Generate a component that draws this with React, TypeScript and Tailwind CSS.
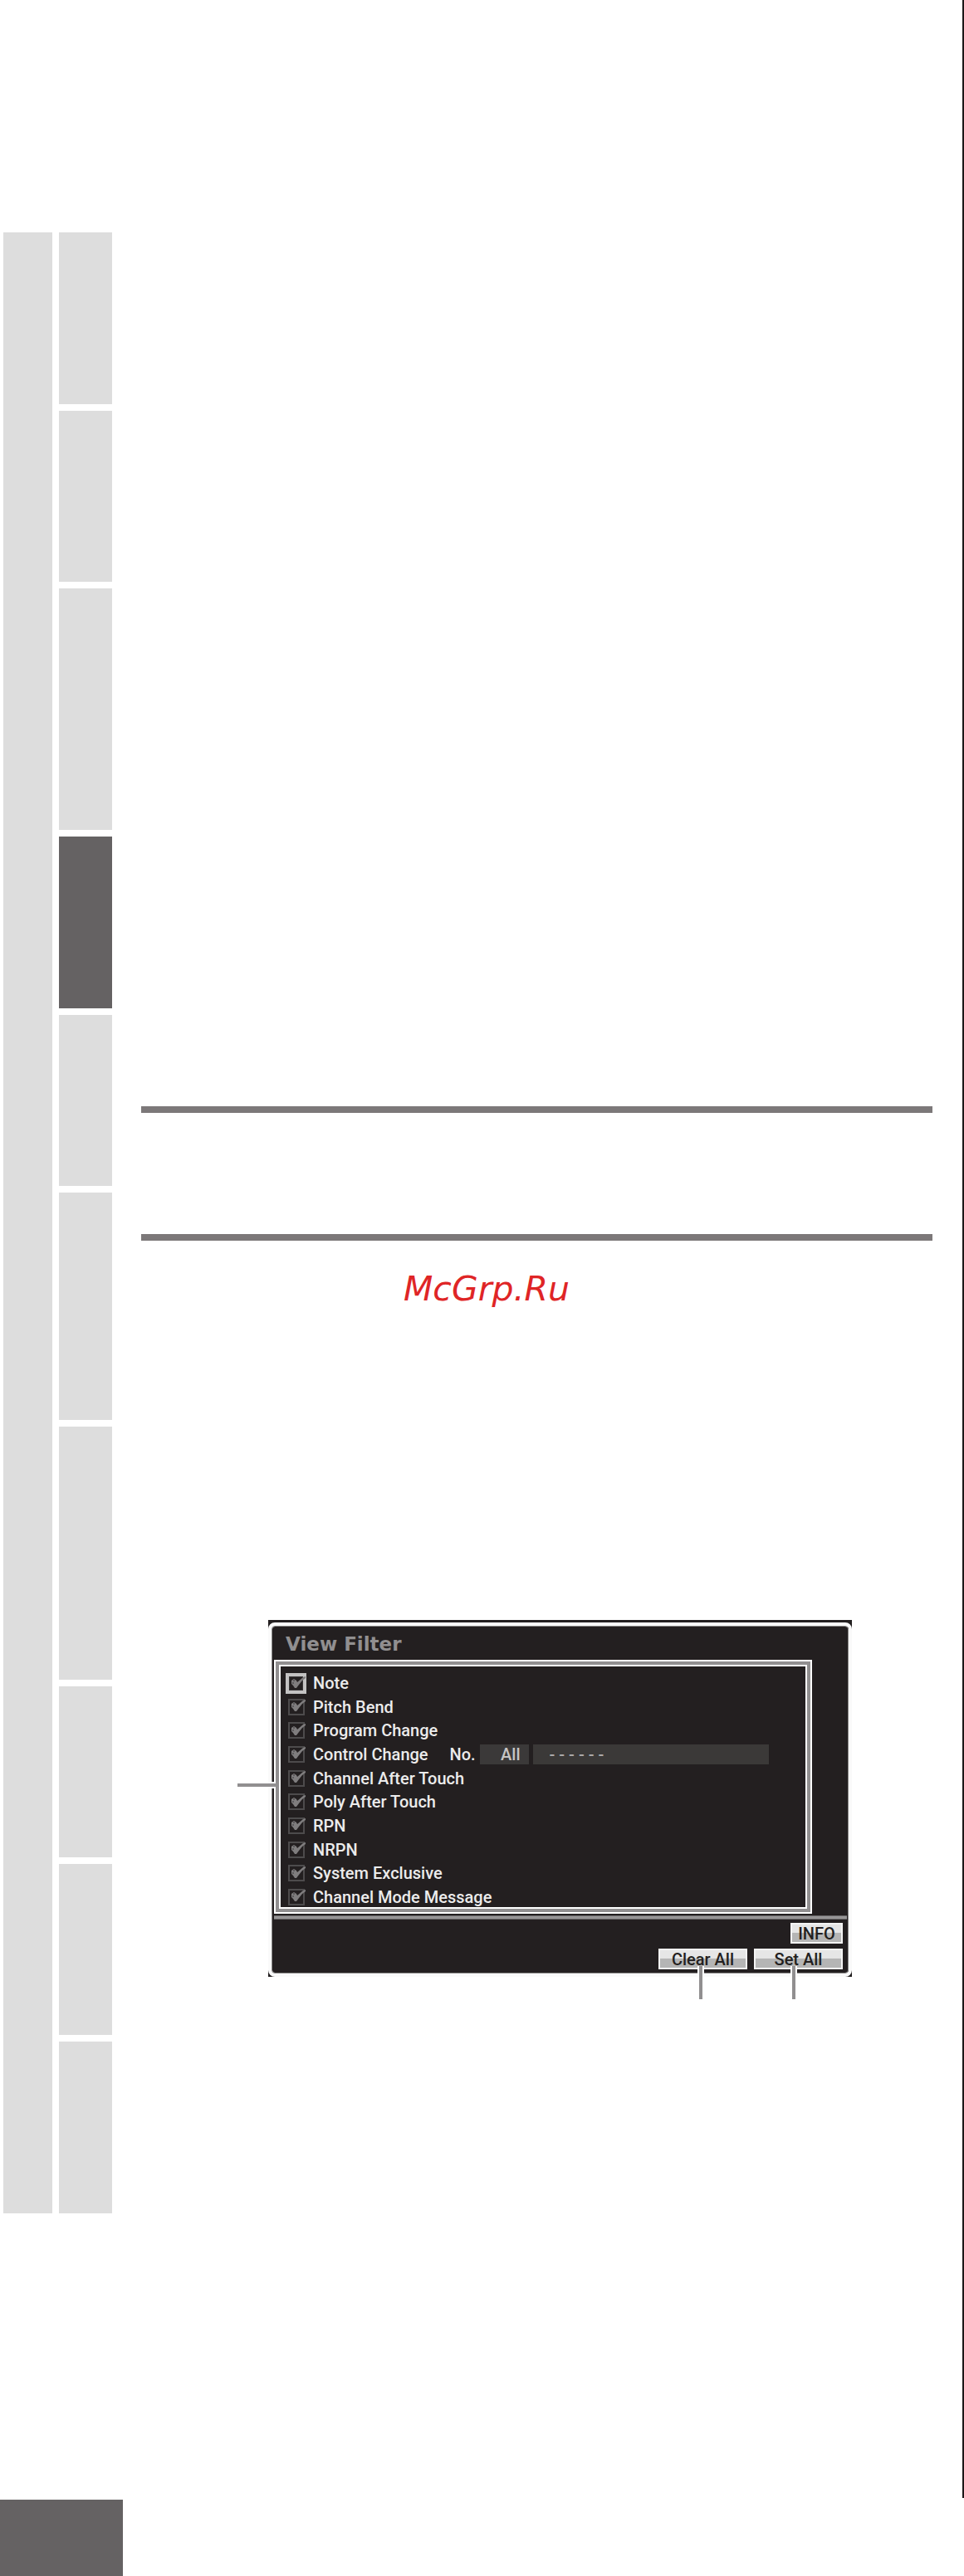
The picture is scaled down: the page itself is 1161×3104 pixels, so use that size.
import React, { useState } from "react";

const chapterTabs = [
  { height: "h-[207px]", active: false },
  { height: "h-[206px]", active: false },
  { height: "h-[291px]", active: false },
  { height: "h-[207px]", active: true },
  { height: "h-[206px]", active: false },
  { height: "h-[274px]", active: false },
  { height: "h-[305px]", active: false },
  { height: "h-[206px]", active: false },
  { height: "h-[206px]", active: false },
  { height: "h-[207px]", active: false },
];

const filters = [
  "Note",
  "Pitch Bend",
  "Program Change",
  "Control Change",
  "Channel After Touch",
  "Poly After Touch",
  "RPN",
  "NRPN",
  "System Exclusive",
  "Channel Mode Message",
];

function FilterRow({ name, focused }: { name: string; focused: boolean }) {
  const [on, setOn] = useState(true);
  return (
    <li className="flex h-6 items-center">
      <label className="flex items-center gap-2 whitespace-pre">
        <span
          className={
            focused
              ? "relative grid size-[25px] place-items-center bg-[#c3c2c2]"
              : "relative grid size-[25px] place-items-center"
          }
        >
          <input
            type="checkbox"
            checked={on}
            onChange={() => setOn(!on)}
            className={
              focused
                ? "size-[17px] appearance-none border border-[#3a3839] bg-[#231f20]"
                : "size-5 appearance-none border-2 border-[#4d4b4c] bg-[#231f20]"
            }
          />
          {on && (
            <svg viewBox="0 0 25 25" className="pointer-events-none absolute inset-0 size-full" aria-hidden="true">
              <path d="M7 9l3-2 3 2 1 2 7-6 3-1v2l-4 3-4 5-3 4h-2l-2-3-2-2z" fill="#7f7d7e" />
              <path d="M9 9h2M8 12h2" stroke="#3b393a" strokeWidth="1" />
            </svg>
          )}
        </span>
        <span>{name}</span>
      </label>
      {name === "Control Change" && (
        <>
          <label htmlFor="cc-number" className="ml-[26px] w-9">
            No.
          </label>
          <input
            id="cc-number"
            defaultValue="All"
            className="h-6 w-[59px] bg-[#3b3939] pr-[10px] text-right text-[#c6c5c5]"
          />
          <input
            aria-label="Control name"
            defaultValue="- - - - - -"
            className="ml-[5px] h-6 w-[284px] min-w-0 bg-[#3b3938] pl-5 text-[#aaa8a9]"
          />
        </>
      )}
    </li>
  );
}

function ScreenButton({ children, width }: { children: React.ReactNode; width: string }) {
  return (
    <button
      type="button"
      className={`${width} h-[25px] border-2 border-[#f4f4f4] bg-linear-to-b from-[#e6e6e6] from-45% to-[#b5b5b5] to-50% text-center leading-5 text-[#231f20]`}
    >
      {children}
    </button>
  );
}

function Leader({ place }: { place: string }) {
  return (
    <div className={`absolute top-[417px] h-10 w-2 ${place}`}>
      <div className="h-[13px] border-x-2 border-white bg-[#918f90]" />
      <div className="mx-auto h-[27px] w-1 bg-[#918f90]" />
    </div>
  );
}

function ViewFilterScreen() {
  return (
    <section className="relative w-full max-w-[703px] bg-[#231f20] pt-[3px] font-[Roboto,sans-serif] text-xl leading-6 font-medium text-[#ececec]">
      <div className="rounded-lg border-[5px] border-r-4 border-[#fafafa] bg-[#231f20] px-[2px] pb-[4px] outline-1 -outline-offset-5 outline-[#8b8989]">
        <h1 className="h-10 pt-[9px] pl-[14px] font-[DejaVu_Sans,sans-serif] text-[23px] leading-6 font-bold text-[#918f90]">
          View Filter
        </h1>
        <div className="mr-[42px] border-2 border-white">
          <div className="border-4 border-[#918f90]">
            <ul className="flex h-[294px] flex-col justify-between border-2 border-white pt-2 pl-[6px]">
              {filters.map((name, i) => (
                <FilterRow key={name} name={name} focused={i === 0} />
              ))}
            </ul>
          </div>
        </div>
        <div className="mt-[2px] h-[5px] border-y border-[#6b696a] bg-[#979596]" />
        <div className="mt-1 flex flex-col items-end gap-[6px] pr-[5px]">
          <ScreenButton width="w-[63px]">INFO</ScreenButton>
          <div className="flex gap-2">
            <ScreenButton width="w-[107px]">Clear All</ScreenButton>
            <ScreenButton width="w-[107px]">Set All</ScreenButton>
          </div>
        </div>
      </div>
      <div className="absolute top-[195px] -left-[37px] flex h-2 w-[46px] items-center">
        <div className="h-1 w-10 bg-[#918f90]" />
        <div className="h-2 w-[6px] border-y-2 border-white bg-[#918f90]" />
      </div>
      <Leader place="right-[178px]" />
      <Leader place="right-[66px]" />
    </section>
  );
}

export default function App() {
  return (
    <div className="min-h-screen bg-white">
      <div className="flex border-r-2 border-[#1b1718] pb-[343px]">
        <aside className="flex shrink-0 gap-2 pt-[280px] pl-1">
          <div className="w-[59px] bg-[#dddddd]" />
          <nav aria-label="Chapters" className="flex w-16 flex-col gap-2">
            {chapterTabs.map((tab, i) => (
              <div key={i} className={`${tab.height} ${tab.active ? "bg-[#656263]" : "bg-[#dddddd]"}`} />
            ))}
          </nav>
        </aside>
        <main className="min-w-0 flex-1 pt-[1333px] pr-9 pl-[35px]">
          <hr className="h-2 border-0 bg-[#7c7879]" />
          <hr className="mt-[146px] h-2 border-0 bg-[#7c7879]" />
          <p className="mt-[34px] ml-[316px] font-[DejaVu_Sans,sans-serif] text-[41px] leading-[48px] text-[#df2526] italic">
            McGrp.Ru
          </p>
          <div className="mt-[375px] ml-[153px]">
            <ViewFilterScreen />
          </div>
        </main>
      </div>
      <footer className="mt-[2px] h-[92px] w-[148px] bg-[#656263]" />
    </div>
  );
}
